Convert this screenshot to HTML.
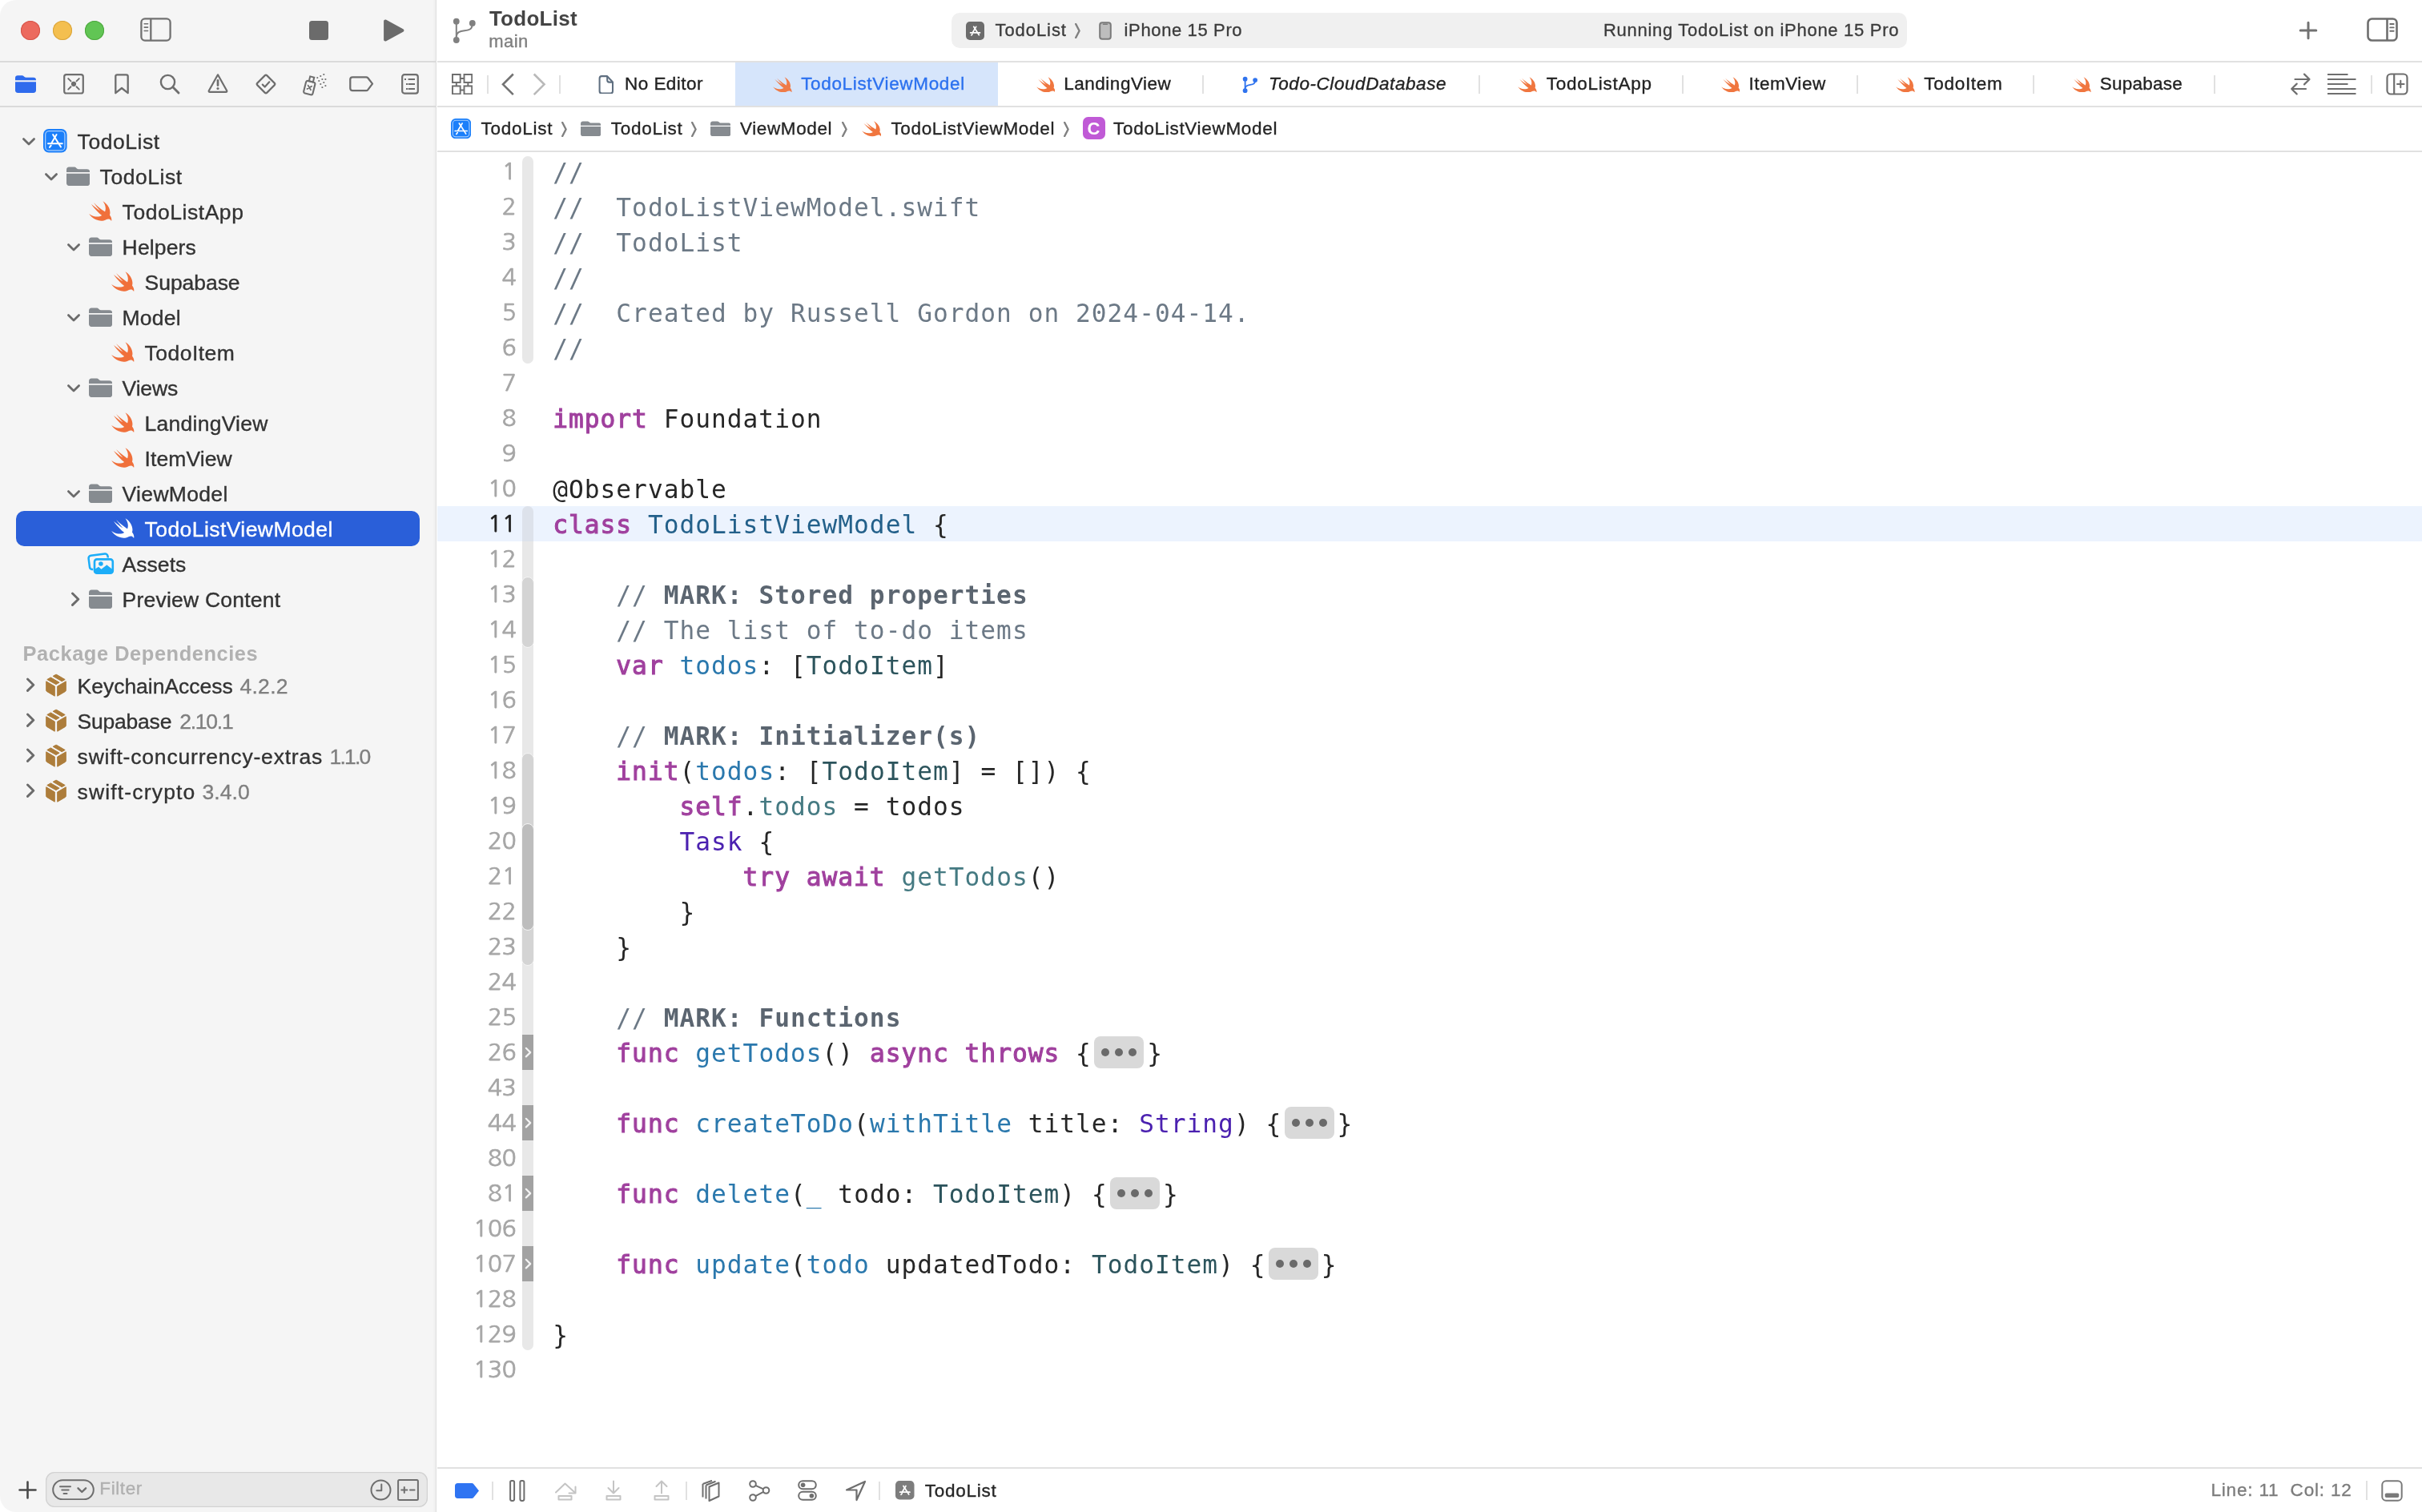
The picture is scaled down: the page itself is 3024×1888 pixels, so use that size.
<!DOCTYPE html>
<html lang="en"><head><meta charset="utf-8"><title>TodoList — TodoListViewModel.swift</title>
<style>
html,body{margin:0;padding:0}
body{width:3024px;height:1888px;overflow:hidden;background:#fff;position:relative;font-family:"Liberation Sans", sans-serif;-webkit-font-smoothing:antialiased}
#sidebar{position:absolute;left:0;top:0;width:544.4px;height:1888px;background:linear-gradient(to right,#f5f5f5 540px,#ededed 544px);border-right:1.6px solid #dedede;border-radius:20px 0 0 20px;box-sizing:content-box}
#win{position:absolute;left:0;top:0;width:3024px;height:1888px;will-change:transform}
.t{position:absolute;white-space:pre;-webkit-text-stroke:0.35px currentColor}
.ln{position:absolute;left:546px;width:98.7px;text-align:right;height:44px;line-height:43px;font-size:29.5px;font-family:"NanumGothic", "Liberation Sans", sans-serif;-webkit-text-stroke:0.75px currentColor}
.cl{position:absolute;left:690.2px;margin:0;height:44px;line-height:46.4px;font-size:31.2px;letter-spacing:1.006px;font-family:"DejaVu Sans Mono", "Liberation Mono", monospace;white-space:pre;color:#262626}
.k{color:#a0409e;-webkit-text-stroke:1.05px #a0409e}
.fold{display:inline-block;vertical-align:top;width:62px;height:40px;margin:2px 4px 0 3.3px;border-radius:8px;background:#d9d9d9;position:relative}
.fold i{position:absolute;top:15px;width:10px;height:10px;border-radius:50%;background:#6a6a6a}
.fold i:nth-child(1){left:9.1px}.fold i:nth-child(2){left:26px}.fold i:nth-child(3){left:43.1px}
</style></head>
<body>
<div id="win">
<div id="sidebar"></div>
<div style="position:absolute;left:0px;top:76px;width:544px;height:2px;background:#dadada"></div>
<div style="position:absolute;left:0px;top:132px;width:544px;height:2px;background:#dadada"></div>
<div style="position:absolute;left:26px;top:26px;width:24px;height:24px;border-radius:50%;background:#ec6a5e;box-shadow:inset 0 0 0 1px #d5554a"></div>
<div style="position:absolute;left:66px;top:26px;width:24px;height:24px;border-radius:50%;background:#f4bf4f;box-shadow:inset 0 0 0 1px #d9a43c"></div>
<div style="position:absolute;left:106px;top:26px;width:24px;height:24px;border-radius:50%;background:#61c554;box-shadow:inset 0 0 0 1px #4ea73f"></div>
<svg style="position:absolute;left:174px;top:21px" width="41" height="32" viewBox="0 0 41 32" ><rect x="2.4" y="2.400" width="36.200" height="27.200" rx="4.600" fill="none" stroke="#717171" stroke-width="2.300"/><path d="M14.300 2.500V29.500" stroke="#717171" stroke-width="2.300"/><path d="M6.200 8.700H10.600M6.200 13.100H10.600M6.200 17.500H10.600" stroke="#717171" stroke-width="1.600" stroke-linecap="round"/></svg>
<div style="position:absolute;left:386px;top:26px;width:24px;height:24px;background:#6b6b6b;border-radius:3.5px"></div>
<svg style="position:absolute;left:477.3px;top:23px" width="29.5" height="30" viewBox="0 0 28 30" preserveAspectRatio="none"><path d="M2 3.4C2 1.7 3.6.9 5 1.7L25 13.2c1.4.8 1.4 2.8 0 3.6L5 28.3c-1.4.8-3-.0-3-1.7Z" fill="#6b6b6b"/></svg>
<svg style="position:absolute;left:19px;top:94px" width="26" height="22.2" viewBox="0 0 27 23" preserveAspectRatio="none"><path d="M0 3.6C0 1.4 1.2.3 3.3.3H8.4c1.2 0 1.900.3 2.700 1l.9.8c.6.5 1.100.7 2 .7H23.600c2.200 0 3.400 1.200 3.400 3.400V6.600H0Z" fill="#2f6bed"/><path d="M0 8.500H27V19.300c0 2.300-1.200 3.500-3.500 3.500H3.500C1.200 22.800 0 21.600 0 19.300Z" fill="#2f6bed"/></svg>
<svg style="position:absolute;left:79px;top:92.2px" width="26" height="25.7" viewBox="0 0 26 25.700" ><rect x="1.200" y="1.200" width="23.600" height="23.300" rx="2.600" fill="none" stroke="#6e6e6e" stroke-width="2.200"/><path d="M6.200 6.100L9.500 9.400M19.800 6.100L16.500 9.400M6.200 19.600L9.500 16.300M19.800 19.600L16.500 16.300" stroke="#6e6e6e" stroke-width="1.900" stroke-linecap="round"/><circle cx="13" cy="12.850" r="3.100" fill="#6e6e6e"/></svg>
<svg style="position:absolute;left:143px;top:92.2px" width="18" height="25.7" viewBox="0 0 18 25.700" ><path d="M1.300 3.300C1.300 2 2 1.300 3.300 1.300H14.700c1.300 0 2 .7 2 2V24.200L9 18L1.300 24.200Z" fill="none" stroke="#6e6e6e" stroke-width="2.300" stroke-linejoin="round"/></svg>
<svg style="position:absolute;left:199px;top:92px" width="27" height="27" viewBox="0 0 27 27" ><circle cx="10.500" cy="10.500" r="8.600" fill="none" stroke="#6e6e6e" stroke-width="2.400"/><path d="M16.800 16.800L24 24" stroke="#6e6e6e" stroke-width="2.900" stroke-linecap="round"/></svg>
<svg style="position:absolute;left:259px;top:91px" width="26" height="26" viewBox="0 0 26 26" ><path d="M13 2.300L24.200 22.200c.4.800-.100 1.600-1 1.600H2.800C1.900 23.800 1.400 23 1.800 22.200Z" fill="none" stroke="#6e6e6e" stroke-width="2.200" stroke-linejoin="round"/><path d="M13 9.300V15.600" stroke="#6e6e6e" stroke-width="2.700" stroke-linecap="round"/><circle cx="13" cy="19.500" r="1.600" fill="#6e6e6e"/></svg>
<svg style="position:absolute;left:318px;top:91px" width="28" height="28" viewBox="0 0 28 28" ><path d="M12.600 3.400c.8-.8 2-.8 2.800 0L24.600 12.600c.8.800.8 2 0 2.800L15.400 24.600c-.8.800-2 .8-2.800 0L3.400 15.400c-.8-.8-.8-2 0-2.800Z" fill="none" stroke="#6e6e6e" stroke-width="2.200" stroke-linejoin="round"/><path d="M9.800 14.600L12.700 17.500L18.300 11.300" fill="none" stroke="#6e6e6e" stroke-width="2.200" stroke-linecap="round" stroke-linejoin="round"/></svg>
<svg style="position:absolute;left:376px;top:90px" width="34" height="30" viewBox="0 0 34 30" ><g transform="translate(1.200 .8) rotate(14 10 18)"><rect x="3.500" y="11" width="11.600" height="16" rx="2.200" fill="none" stroke="#6e6e6e" stroke-width="2.100"/><rect x="6.800" y="5" width="5.200" height="6" fill="none" stroke="#6e6e6e" stroke-width="2"/><path d="M7 16.500L11.600 21.100M11.600 16.500L7 21.100" stroke="#6e6e6e" stroke-width="1.800" stroke-linecap="round"/></g><g fill="#6e6e6e"><rect x="19.400" y="6.200" width="1.800" height="1.800"/><rect x="23.400" y="4.100" width="1.800" height="1.800"/><rect x="27.400" y="2.100" width="1.800" height="1.800"/><rect x="21.400" y="10.100" width="1.800" height="1.800"/><rect x="25.500" y="8.100" width="1.800" height="1.800"/><rect x="29.500" y="8.100" width="1.800" height="1.800"/><rect x="23.400" y="14.100" width="1.800" height="1.800"/><rect x="27.400" y="12.100" width="1.800" height="1.800"/><rect x="25.500" y="18.200" width="1.800" height="1.800"/><rect x="29.500" y="16.200" width="1.800" height="1.800"/></g></svg>
<svg style="position:absolute;left:436.4px;top:95.2px" width="30.6" height="19.4" viewBox="0 0 31 20" preserveAspectRatio="none"><path d="M4.200 1.300H21.400c.9 0 1.600.3 2.200 1L29.400 10L23.600 17.700c-.6.7-1.300 1-2.200 1H4.200c-1.800 0-2.900-1.100-2.900-2.900V4.200C1.300 2.400 2.400 1.300 4.200 1.300Z" fill="none" stroke="#6e6e6e" stroke-width="2.300" stroke-linejoin="round"/></svg>
<svg style="position:absolute;left:501px;top:92px" width="22" height="26" viewBox="0 0 22 26" ><rect x="1.200" y="1.200" width="19.600" height="23.400" rx="2.800" fill="none" stroke="#6e6e6e" stroke-width="2.200"/><path d="M8.600 7H17M8.600 13H17M8.600 19H17" stroke="#6e6e6e" stroke-width="2"/><path d="M4 7H6M6 13H8M6 19H8" stroke="#6e6e6e" stroke-width="2"/></svg>
<div style="position:absolute;left:20px;top:638px;width:504px;height:44px;background:#2a5fd9;border-radius:10px"></div>
<svg style="position:absolute;left:27px;top:170.9px" width="18" height="12" viewBox="0 0 18 12" ><path d="M2.4 2.6L9 9L15.6 2.6" fill="none" stroke="#6b6b6b" stroke-width="2.8" stroke-linecap="round" stroke-linejoin="round"/></svg>
<svg style="position:absolute;left:54.3px;top:161.1px" width="29.6" height="29.6" viewBox="0 0 30 30" ><rect x="0" y="0" width="30" height="30" rx="7" fill="#1b7ffa"/><rect x="2.700" y="2.700" width="24.600" height="24.600" rx="4.600" fill="none" stroke="#a9cffd" stroke-width="1.300"/><g fill="none" stroke="#fff" stroke-width="2" stroke-linecap="round"><path d="M16.80 7.20L10.70 17.60"/><path d="M9.80 20.90L8.10 23.20"/><path d="M12.30 7.20L22.30 22.80"/><path d="M6.10 18.50H24.10"/></g></svg>
<div class="t " style="left:96.6px;top:160.72px;font-size:26.5px;line-height:33px;color:#333333;font-weight:400;letter-spacing:0.542px;">TodoList</div>
<svg style="position:absolute;left:55px;top:214.9px" width="18" height="12" viewBox="0 0 18 12" ><path d="M2.4 2.6L9 9L15.6 2.6" fill="none" stroke="#6b6b6b" stroke-width="2.8" stroke-linecap="round" stroke-linejoin="round"/></svg>
<svg style="position:absolute;left:82.7px;top:208.0px" width="29.2" height="24.4" viewBox="0 0 30 24" preserveAspectRatio="none"><path d="M0 4.2C0 1.9 1.2 0.6 3.4 0.6H9.6c1.3 0 2 .3 2.9 1.1l.9.8c.6.5 1.1.7 2 .7H26.4c2.3 0 3.6 1.3 3.6 3.6V7H0Z" fill="#868b90"/><path d="M0 8.6H30V20c0 2.4-1.3 3.7-3.7 3.7H3.7C1.3 23.7 0 22.4 0 20Z" fill="#868b90"/></svg>
<div class="t " style="left:124.6px;top:204.72px;font-size:26.5px;line-height:33px;color:#333333;font-weight:400;letter-spacing:0.542px;">TodoList</div>
<svg style="position:absolute;left:111.3px;top:250.89999999999998px" width="28.6" height="25.4" viewBox="2.3 3.3 18.4 16.7" preserveAspectRatio="none"><path d="M13.543 3.41c4.114 2.47 6.545 7.162 5.549 11.131-.024.093-.05.181-.076.272l.002.001c2.062 2.538 1.5 5.258 1.236 4.745-1.072-2.086-3.066-1.568-4.088-1.043a6.803 6.803 0 0 1-.281.158l-.02.012-.002.002c-2.115 1.123-4.957 1.205-7.812-.022a12.568 12.568 0 0 1-5.64-4.838c.649.48 1.35.902 2.097 1.252 3.019 1.414 6.051 1.311 8.197-.002C9.651 12.73 7.101 9.67 5.146 7.191a10.628 10.628 0 0 1-1.005-1.384c2.34 2.142 6.038 4.83 7.365 5.576C8.69 8.408 6.208 4.743 6.324 4.86c4.436 4.47 8.528 6.996 8.528 6.996.154.085.27.154.36.213.085-.215.16-.437.224-.668.708-2.588-.09-5.548-1.893-7.992z" fill="#f0703b"/></svg>
<div class="t " style="left:152.6px;top:248.72px;font-size:26.5px;line-height:33px;color:#333333;font-weight:400;letter-spacing:0.544px;">TodoListApp</div>
<svg style="position:absolute;left:83px;top:302.9px" width="18" height="12" viewBox="0 0 18 12" ><path d="M2.4 2.6L9 9L15.6 2.6" fill="none" stroke="#6b6b6b" stroke-width="2.8" stroke-linecap="round" stroke-linejoin="round"/></svg>
<svg style="position:absolute;left:110.7px;top:296.0px" width="29.2" height="24.4" viewBox="0 0 30 24" preserveAspectRatio="none"><path d="M0 4.2C0 1.9 1.2 0.6 3.4 0.6H9.6c1.3 0 2 .3 2.9 1.1l.9.8c.6.5 1.1.7 2 .7H26.4c2.3 0 3.6 1.3 3.6 3.6V7H0Z" fill="#868b90"/><path d="M0 8.6H30V20c0 2.4-1.3 3.7-3.7 3.7H3.7C1.3 23.7 0 22.4 0 20Z" fill="#868b90"/></svg>
<div class="t " style="left:152.6px;top:292.72px;font-size:26.5px;line-height:33px;color:#333333;font-weight:400;letter-spacing:0.145px;">Helpers</div>
<svg style="position:absolute;left:139.3px;top:338.9px" width="28.6" height="25.4" viewBox="2.3 3.3 18.4 16.7" preserveAspectRatio="none"><path d="M13.543 3.41c4.114 2.47 6.545 7.162 5.549 11.131-.024.093-.05.181-.076.272l.002.001c2.062 2.538 1.5 5.258 1.236 4.745-1.072-2.086-3.066-1.568-4.088-1.043a6.803 6.803 0 0 1-.281.158l-.02.012-.002.002c-2.115 1.123-4.957 1.205-7.812-.022a12.568 12.568 0 0 1-5.64-4.838c.649.48 1.35.902 2.097 1.252 3.019 1.414 6.051 1.311 8.197-.002C9.651 12.73 7.101 9.67 5.146 7.191a10.628 10.628 0 0 1-1.005-1.384c2.34 2.142 6.038 4.83 7.365 5.576C8.69 8.408 6.208 4.743 6.324 4.86c4.436 4.47 8.528 6.996 8.528 6.996.154.085.27.154.36.213.085-.215.16-.437.224-.668.708-2.588-.09-5.548-1.893-7.992z" fill="#f0703b"/></svg>
<div class="t " style="left:180.6px;top:336.72px;font-size:26.5px;line-height:33px;color:#333333;font-weight:400;letter-spacing:-0.051px;">Supabase</div>
<svg style="position:absolute;left:83px;top:390.9px" width="18" height="12" viewBox="0 0 18 12" ><path d="M2.4 2.6L9 9L15.6 2.6" fill="none" stroke="#6b6b6b" stroke-width="2.8" stroke-linecap="round" stroke-linejoin="round"/></svg>
<svg style="position:absolute;left:110.7px;top:384.0px" width="29.2" height="24.4" viewBox="0 0 30 24" preserveAspectRatio="none"><path d="M0 4.2C0 1.9 1.2 0.6 3.4 0.6H9.6c1.3 0 2 .3 2.9 1.1l.9.8c.6.5 1.1.7 2 .7H26.4c2.3 0 3.6 1.3 3.6 3.6V7H0Z" fill="#868b90"/><path d="M0 8.6H30V20c0 2.4-1.3 3.7-3.7 3.7H3.7C1.3 23.7 0 22.4 0 20Z" fill="#868b90"/></svg>
<div class="t " style="left:152.6px;top:380.72px;font-size:26.5px;line-height:33px;color:#333333;font-weight:400;letter-spacing:0.203px;">Model</div>
<svg style="position:absolute;left:139.3px;top:426.9px" width="28.6" height="25.4" viewBox="2.3 3.3 18.4 16.7" preserveAspectRatio="none"><path d="M13.543 3.41c4.114 2.47 6.545 7.162 5.549 11.131-.024.093-.05.181-.076.272l.002.001c2.062 2.538 1.5 5.258 1.236 4.745-1.072-2.086-3.066-1.568-4.088-1.043a6.803 6.803 0 0 1-.281.158l-.02.012-.002.002c-2.115 1.123-4.957 1.205-7.812-.022a12.568 12.568 0 0 1-5.64-4.838c.649.48 1.35.902 2.097 1.252 3.019 1.414 6.051 1.311 8.197-.002C9.651 12.73 7.101 9.67 5.146 7.191a10.628 10.628 0 0 1-1.005-1.384c2.34 2.142 6.038 4.83 7.365 5.576C8.69 8.408 6.208 4.743 6.324 4.86c4.436 4.47 8.528 6.996 8.528 6.996.154.085.27.154.36.213.085-.215.16-.437.224-.668.708-2.588-.09-5.548-1.893-7.992z" fill="#f0703b"/></svg>
<div class="t " style="left:180.6px;top:424.72px;font-size:26.5px;line-height:33px;color:#333333;font-weight:400;letter-spacing:0.469px;">TodoItem</div>
<svg style="position:absolute;left:83px;top:478.9px" width="18" height="12" viewBox="0 0 18 12" ><path d="M2.4 2.6L9 9L15.6 2.6" fill="none" stroke="#6b6b6b" stroke-width="2.8" stroke-linecap="round" stroke-linejoin="round"/></svg>
<svg style="position:absolute;left:110.7px;top:472.0px" width="29.2" height="24.4" viewBox="0 0 30 24" preserveAspectRatio="none"><path d="M0 4.2C0 1.9 1.2 0.6 3.4 0.6H9.6c1.3 0 2 .3 2.9 1.1l.9.8c.6.5 1.1.7 2 .7H26.4c2.3 0 3.6 1.3 3.6 3.6V7H0Z" fill="#868b90"/><path d="M0 8.6H30V20c0 2.4-1.3 3.7-3.7 3.7H3.7C1.3 23.7 0 22.4 0 20Z" fill="#868b90"/></svg>
<div class="t " style="left:152.6px;top:468.72px;font-size:26.5px;line-height:33px;color:#333333;font-weight:400;letter-spacing:-0.155px;">Views</div>
<svg style="position:absolute;left:139.3px;top:514.9px" width="28.6" height="25.4" viewBox="2.3 3.3 18.4 16.7" preserveAspectRatio="none"><path d="M13.543 3.41c4.114 2.47 6.545 7.162 5.549 11.131-.024.093-.05.181-.076.272l.002.001c2.062 2.538 1.5 5.258 1.236 4.745-1.072-2.086-3.066-1.568-4.088-1.043a6.803 6.803 0 0 1-.281.158l-.02.012-.002.002c-2.115 1.123-4.957 1.205-7.812-.022a12.568 12.568 0 0 1-5.64-4.838c.649.48 1.35.902 2.097 1.252 3.019 1.414 6.051 1.311 8.197-.002C9.651 12.73 7.101 9.67 5.146 7.191a10.628 10.628 0 0 1-1.005-1.384c2.34 2.142 6.038 4.83 7.365 5.576C8.69 8.408 6.208 4.743 6.324 4.86c4.436 4.47 8.528 6.996 8.528 6.996.154.085.27.154.36.213.085-.215.16-.437.224-.668.708-2.588-.09-5.548-1.893-7.992z" fill="#f0703b"/></svg>
<div class="t " style="left:180.6px;top:512.72px;font-size:26.5px;line-height:33px;color:#333333;font-weight:400;letter-spacing:0.252px;">LandingView</div>
<svg style="position:absolute;left:139.3px;top:558.9px" width="28.6" height="25.4" viewBox="2.3 3.3 18.4 16.7" preserveAspectRatio="none"><path d="M13.543 3.41c4.114 2.47 6.545 7.162 5.549 11.131-.024.093-.05.181-.076.272l.002.001c2.062 2.538 1.5 5.258 1.236 4.745-1.072-2.086-3.066-1.568-4.088-1.043a6.803 6.803 0 0 1-.281.158l-.02.012-.002.002c-2.115 1.123-4.957 1.205-7.812-.022a12.568 12.568 0 0 1-5.64-4.838c.649.48 1.35.902 2.097 1.252 3.019 1.414 6.051 1.311 8.197-.002C9.651 12.73 7.101 9.67 5.146 7.191a10.628 10.628 0 0 1-1.005-1.384c2.34 2.142 6.038 4.83 7.365 5.576C8.69 8.408 6.208 4.743 6.324 4.86c4.436 4.47 8.528 6.996 8.528 6.996.154.085.27.154.36.213.085-.215.16-.437.224-.668.708-2.588-.09-5.548-1.893-7.992z" fill="#f0703b"/></svg>
<div class="t " style="left:180.6px;top:556.72px;font-size:26.5px;line-height:33px;color:#333333;font-weight:400;letter-spacing:0.071px;">ItemView</div>
<svg style="position:absolute;left:83px;top:610.9px" width="18" height="12" viewBox="0 0 18 12" ><path d="M2.4 2.6L9 9L15.6 2.6" fill="none" stroke="#6b6b6b" stroke-width="2.8" stroke-linecap="round" stroke-linejoin="round"/></svg>
<svg style="position:absolute;left:110.7px;top:604.0px" width="29.2" height="24.4" viewBox="0 0 30 24" preserveAspectRatio="none"><path d="M0 4.2C0 1.9 1.2 0.6 3.4 0.6H9.6c1.3 0 2 .3 2.9 1.1l.9.8c.6.5 1.1.7 2 .7H26.4c2.3 0 3.6 1.3 3.6 3.6V7H0Z" fill="#868b90"/><path d="M0 8.6H30V20c0 2.4-1.3 3.7-3.7 3.7H3.7C1.3 23.7 0 22.4 0 20Z" fill="#868b90"/></svg>
<div class="t " style="left:152.6px;top:600.72px;font-size:26.5px;line-height:33px;color:#333333;font-weight:400;letter-spacing:0.320px;">ViewModel</div>
<svg style="position:absolute;left:139.3px;top:646.9px" width="28.6" height="25.4" viewBox="2.3 3.3 18.4 16.7" preserveAspectRatio="none"><path d="M13.543 3.41c4.114 2.47 6.545 7.162 5.549 11.131-.024.093-.05.181-.076.272l.002.001c2.062 2.538 1.5 5.258 1.236 4.745-1.072-2.086-3.066-1.568-4.088-1.043a6.803 6.803 0 0 1-.281.158l-.02.012-.002.002c-2.115 1.123-4.957 1.205-7.812-.022a12.568 12.568 0 0 1-5.64-4.838c.649.48 1.35.902 2.097 1.252 3.019 1.414 6.051 1.311 8.197-.002C9.651 12.73 7.101 9.67 5.146 7.191a10.628 10.628 0 0 1-1.005-1.384c2.34 2.142 6.038 4.83 7.365 5.576C8.69 8.408 6.208 4.743 6.324 4.86c4.436 4.47 8.528 6.996 8.528 6.996.154.085.27.154.36.213.085-.215.16-.437.224-.668.708-2.588-.09-5.548-1.893-7.992z" fill="#fff"/></svg>
<div class="t " style="left:180.6px;top:644.72px;font-size:26.5px;line-height:33px;color:#fff;font-weight:400;letter-spacing:0.429px;">TodoListViewModel</div>
<svg style="position:absolute;left:108px;top:688.0px" width="36" height="31" viewBox="0 0 36 31" ><rect x="3.200" y="4.550" width="24.100" height="17.400" rx="3.200" fill="none" stroke="#1cadf8" stroke-width="2.500" transform="rotate(-7.300 15.250 13.250)"/><rect x="8.200" y="8.600" width="26.400" height="20.900" rx="4.600" fill="#f5f5f5"/><path d="M10 23L15.100 19.800L18.500 22.800L24.600 17.900c.5-.4 1-.4 1.500 0L32.800 23.300V27.700H10Z" fill="#1cadf8"/><circle cx="17.900" cy="16" r="2.800" fill="#1cadf8"/><rect x="10" y="10.400" width="22.800" height="17.300" rx="3" fill="none" stroke="#1cadf8" stroke-width="2.600"/></svg>
<div class="t " style="left:152.6px;top:688.72px;font-size:26.5px;line-height:33px;color:#333333;font-weight:400;letter-spacing:0.034px;">Assets</div>
<svg style="position:absolute;left:87.85px;top:739.1999999999999px" width="12.3" height="18.4" viewBox="0 0 12.300 18.400" ><path d="M2.500 2L9.800 9.200L2.500 16.400" fill="none" stroke="#6b6b6b" stroke-width="2.900" stroke-linecap="round" stroke-linejoin="round"/></svg>
<svg style="position:absolute;left:110.7px;top:736.0px" width="29.2" height="24.4" viewBox="0 0 30 24" preserveAspectRatio="none"><path d="M0 4.2C0 1.9 1.2 0.6 3.4 0.6H9.6c1.3 0 2 .3 2.9 1.1l.9.8c.6.5 1.1.7 2 .7H26.4c2.3 0 3.6 1.3 3.6 3.6V7H0Z" fill="#868b90"/><path d="M0 8.6H30V20c0 2.4-1.3 3.7-3.7 3.7H3.7C1.3 23.7 0 22.4 0 20Z" fill="#868b90"/></svg>
<div class="t " style="left:152.6px;top:732.72px;font-size:26.5px;line-height:33px;color:#333333;font-weight:400;letter-spacing:0.219px;">Preview Content</div>
<div class="t " style="left:28.6px;top:799.90px;font-size:25.4px;line-height:32px;color:#b1b1b1;font-weight:700;letter-spacing:0.565px;-webkit-text-stroke:0;">Package Dependencies</div>
<svg style="position:absolute;left:31.9px;top:846.15px" width="12.3" height="18.4" viewBox="0 0 12.300 18.400" ><path d="M2.500 2L9.800 9.200L2.500 16.400" fill="none" stroke="#6b6b6b" stroke-width="2.900" stroke-linecap="round" stroke-linejoin="round"/></svg>
<svg style="position:absolute;left:56px;top:841px" width="28" height="30" viewBox="0 0 28 30" ><g fill="#ad7d3b" stroke="#ad7d3b" stroke-width="1" stroke-linejoin="round"><path d="M1.700 9.800L12.300 16V28.200L2.600 22.500c-.6-.4-.9-.9-.9-1.600Z"/><path d="M26.300 9.800L15.700 16V28.200L25.400 22.500c.6-.4.9-.9.9-1.600Z"/><path d="M2.800 7.500L7.300 4.900L18.100 11.200L13.900 13.600Z"/><path d="M10.200 3.300L13.300 1.500c.5-.3 1.100-.3 1.600 0L25.200 7.500L21.200 9.700Z"/></g></svg>
<div class="t " style="left:96.6px;top:840.72px;font-size:26.5px;line-height:33px;color:#333333;font-weight:400;letter-spacing:-0.026px;">KeychainAccess</div>
<div class="t " style="left:299.40000000000003px;top:840.72px;font-size:26.5px;line-height:33px;color:#7f7f7f;font-weight:400;letter-spacing:0.312px;">4.2.2</div>
<svg style="position:absolute;left:31.9px;top:890.15px" width="12.3" height="18.4" viewBox="0 0 12.300 18.400" ><path d="M2.500 2L9.800 9.200L2.500 16.400" fill="none" stroke="#6b6b6b" stroke-width="2.900" stroke-linecap="round" stroke-linejoin="round"/></svg>
<svg style="position:absolute;left:56px;top:885px" width="28" height="30" viewBox="0 0 28 30" ><g fill="#ad7d3b" stroke="#ad7d3b" stroke-width="1" stroke-linejoin="round"><path d="M1.700 9.800L12.300 16V28.200L2.600 22.500c-.6-.4-.9-.9-.9-1.600Z"/><path d="M26.300 9.800L15.700 16V28.200L25.400 22.500c.6-.4.9-.9.9-1.600Z"/><path d="M2.800 7.500L7.300 4.900L18.100 11.200L13.900 13.600Z"/><path d="M10.200 3.300L13.300 1.500c.5-.3 1.100-.3 1.600 0L25.200 7.500L21.200 9.700Z"/></g></svg>
<div class="t " style="left:96.6px;top:884.72px;font-size:26.5px;line-height:33px;color:#333333;font-weight:400;letter-spacing:-0.223px;">Supabase</div>
<div class="t " style="left:224.20000000000002px;top:884.72px;font-size:26.5px;line-height:33px;color:#7f7f7f;font-weight:400;letter-spacing:-1.238px;">2.10.1</div>
<svg style="position:absolute;left:31.9px;top:934.15px" width="12.3" height="18.4" viewBox="0 0 12.300 18.400" ><path d="M2.500 2L9.800 9.200L2.500 16.400" fill="none" stroke="#6b6b6b" stroke-width="2.900" stroke-linecap="round" stroke-linejoin="round"/></svg>
<svg style="position:absolute;left:56px;top:929px" width="28" height="30" viewBox="0 0 28 30" ><g fill="#ad7d3b" stroke="#ad7d3b" stroke-width="1" stroke-linejoin="round"><path d="M1.700 9.800L12.300 16V28.200L2.600 22.500c-.6-.4-.9-.9-.9-1.600Z"/><path d="M26.300 9.800L15.700 16V28.200L25.400 22.500c.6-.4.9-.9.9-1.600Z"/><path d="M2.800 7.500L7.300 4.900L18.100 11.200L13.900 13.600Z"/><path d="M10.200 3.300L13.300 1.500c.5-.3 1.100-.3 1.600 0L25.200 7.500L21.200 9.700Z"/></g></svg>
<div class="t " style="left:96.6px;top:928.72px;font-size:26.5px;line-height:33px;color:#333333;font-weight:400;letter-spacing:0.806px;">swift-concurrency-extras</div>
<div class="t " style="left:411.5px;top:928.72px;font-size:26.5px;line-height:33px;color:#7f7f7f;font-weight:400;letter-spacing:-1.813px;">1.1.0</div>
<svg style="position:absolute;left:31.9px;top:978.15px" width="12.3" height="18.4" viewBox="0 0 12.300 18.400" ><path d="M2.500 2L9.800 9.200L2.500 16.400" fill="none" stroke="#6b6b6b" stroke-width="2.900" stroke-linecap="round" stroke-linejoin="round"/></svg>
<svg style="position:absolute;left:56px;top:973px" width="28" height="30" viewBox="0 0 28 30" ><g fill="#ad7d3b" stroke="#ad7d3b" stroke-width="1" stroke-linejoin="round"><path d="M1.700 9.800L12.300 16V28.200L2.600 22.500c-.6-.4-.9-.9-.9-1.600Z"/><path d="M26.300 9.800L15.700 16V28.200L25.400 22.500c.6-.4.9-.9.9-1.600Z"/><path d="M2.800 7.500L7.300 4.900L18.100 11.200L13.900 13.600Z"/><path d="M10.200 3.300L13.300 1.500c.5-.3 1.100-.3 1.600 0L25.200 7.500L21.200 9.700Z"/></g></svg>
<div class="t " style="left:96.6px;top:972.72px;font-size:26.5px;line-height:33px;color:#333333;font-weight:400;letter-spacing:1.155px;">swift-crypto</div>
<div class="t " style="left:252.4px;top:972.72px;font-size:26.5px;line-height:33px;color:#7f7f7f;font-weight:400;letter-spacing:0.112px;">3.4.0</div>
<svg style="position:absolute;left:23px;top:1849px" width="23" height="23" viewBox="0 0 23 23" ><path d="M11.500 1.500V21.500M1.500 11.500H21.500" stroke="#4a4a4a" stroke-width="2.600" stroke-linecap="round"/></svg>
<div style="position:absolute;left:56.5px;top:1838.2px;width:477px;height:43.4px;background:#e8e8e8;border-radius:11px;box-shadow:inset 0 0 0 1.3px #d2d2d2"></div>
<svg style="position:absolute;left:64.5px;top:1846.5px" width="53" height="26.5" viewBox="0 0 53 26.500" ><rect x="1.200" y="1.200" width="50.600" height="24.100" rx="12.050" fill="none" stroke="#6e6e6e" stroke-width="2"/><path d="M10 9.300H23M12.300 13.600H20.700M14.500 17.900H18.500" stroke="#6e6e6e" stroke-width="2" stroke-linecap="round"/><path d="M32.500 11.300L37.300 16L42.100 11.300" fill="none" stroke="#6e6e6e" stroke-width="2.400" stroke-linecap="round" stroke-linejoin="round"/></svg>
<div class="t " style="left:124.3px;top:1845.00px;font-size:22.5px;line-height:28px;color:#b0b0b0;font-weight:400;letter-spacing:0.600px;">Filter</div>
<svg style="position:absolute;left:461.5px;top:1846.5px" width="27" height="27" viewBox="0 0 27 27" ><circle cx="13.500" cy="13.500" r="12" fill="none" stroke="#6e6e6e" stroke-width="2"/><path d="M14.300 6.500V14.300H8.300" fill="none" stroke="#6e6e6e" stroke-width="2" stroke-linecap="round" stroke-linejoin="round"/></svg>
<svg style="position:absolute;left:495.5px;top:1846.5px" width="27" height="27" viewBox="0 0 27 27" ><rect x="1.100" y="1.100" width="24.800" height="24.800" rx="1.500" fill="none" stroke="#6e6e6e" stroke-width="2"/><path d="M5.200 13.500H12.400M8.800 9.900V17.100M16 13.500H21.600" stroke="#6e6e6e" stroke-width="2" stroke-linecap="round"/></svg>
<div style="position:absolute;left:546px;top:76px;width:2478px;height:2px;background:#e1e1e1"></div>
<div style="position:absolute;left:546px;top:132px;width:2478px;height:2px;background:#e1e1e1"></div>
<div style="position:absolute;left:546px;top:188px;width:2478px;height:2px;background:#e1e1e1"></div>
<div style="position:absolute;left:546px;top:1832px;width:2478px;height:2px;background:#e1e1e1"></div>
<svg style="position:absolute;left:564px;top:21px" width="32" height="35" viewBox="4 1 32 35" ><g fill="none" stroke="#808080" stroke-width="2" stroke-linecap="round"><path d="M9.800 6.700V30"/><path d="M29.800 8.900C29.800 16 27 17.400 20 18.200C14 18.900 10.300 20 9.800 25.500"/></g><circle cx="9.800" cy="6.700" r="3.9" fill="#808080"/><circle cx="29.800" cy="8.900" r="3.9" fill="#808080"/><circle cx="9.800" cy="30" r="3.9" fill="#808080"/></svg>
<div class="t " style="left:610.9px;top:6.89px;font-size:26px;line-height:32px;color:#444444;font-weight:700;letter-spacing:0.267px;-webkit-text-stroke:0;">TodoList</div>
<div class="t " style="left:610.2px;top:38.08px;font-size:22px;line-height:28px;color:#7f7f7f;font-weight:400;letter-spacing:0.438px;">main</div>
<div style="position:absolute;left:1188px;top:15.7px;width:1193px;height:44.3px;background:#f0f0f0;border-radius:10.500px"></div>
<svg style="position:absolute;left:1206px;top:27px" width="23" height="23" viewBox="0 0 30 30" ><rect x="0" y="0" width="30" height="30" rx="6.5" fill="#6c6c6c"/><g fill="none" stroke="#fff" stroke-width="2.2" stroke-linecap="round"><path d="M16.56 8.23L11.27 17.26"/><path d="M10.48 20.12L9.01 22.12"/><path d="M12.66 8.23L21.34 21.77"/><path d="M7.27 18.04H22.90"/></g></svg>
<div class="t " style="left:1242.5px;top:24.18px;font-size:22px;line-height:28px;color:#3c3c3c;font-weight:400;letter-spacing:0.935px;">TodoList</div>
<svg style="position:absolute;left:1342.2px;top:29.200000000000003px" width="7" height="19" viewBox="0 0 7 19" ><path d="M1.200 1L5.600 9.500L1.200 18" fill="none" stroke="#808080" stroke-width="2.400" stroke-linecap="round" stroke-linejoin="round"/></svg>
<svg style="position:absolute;left:1372px;top:26.5px" width="16" height="23" viewBox="0 0 16 23" ><rect x="1.200" y="1.200" width="13.600" height="20.600" rx="3" fill="#bdbdbd" stroke="#7a7a7a" stroke-width="2"/><path d="M5.500 3.300H10.500" stroke="#7a7a7a" stroke-width="1.600" stroke-linecap="round"/></svg>
<div class="t " style="left:1403.6px;top:24.18px;font-size:22px;line-height:28px;color:#3c3c3c;font-weight:400;letter-spacing:0.630px;">iPhone 15 Pro</div>
<div class="t " style="left:2002px;top:24.18px;font-size:22px;line-height:28px;color:#3c3c3c;font-weight:400;letter-spacing:0.711px;">Running TodoList on iPhone 15 Pro</div>
<svg style="position:absolute;left:2869px;top:25px" width="26" height="26" viewBox="0 0 26 26" ><path d="M13 3.200V22.800M3.200 13H22.800" stroke="#727272" stroke-width="3" stroke-linecap="round"/></svg>
<svg style="position:absolute;left:2954px;top:21px" width="41" height="32" viewBox="0 0 41 32" ><rect x="2.500" y="2.500" width="36" height="27" rx="5" fill="none" stroke="#6e6e6e" stroke-width="2.600"/><path d="M26.500 2.500V29.500" stroke="#6e6e6e" stroke-width="2.600"/><path d="M30.200 9H34.700M30.200 13.400H34.700M30.200 17.800H34.700" stroke="#6e6e6e" stroke-width="1.900" stroke-linecap="round"/></svg>
<svg style="position:absolute;left:563.9px;top:91.7px" width="26.2" height="26.4" viewBox="0 0 27 26.500" preserveAspectRatio="none"><g fill="none" stroke="#6e6e6e" stroke-width="2"><rect x="1" y="1" width="10" height="10"/><rect x="16" y="1" width="10" height="10"/><rect x="1" y="15.500" width="10" height="10"/><rect x="16" y="15.500" width="10" height="10"/><path d="M11 6H16M6 11V15.500M11 20.500H16M21 11V15.500" /></g></svg>
<div style="position:absolute;left:607.8px;top:93.5px;width:2px;height:23px;background:#e1e1e1"></div>
<svg style="position:absolute;left:624px;top:91px" width="19" height="29" viewBox="0 0 19 29" ><path d="M16.800 1.500L4 14.300L16.800 27.100" fill="none" stroke="#737373" stroke-width="2.600" stroke-linejoin="miter"/></svg>
<svg style="position:absolute;left:664.4px;top:91px" width="19" height="29" viewBox="0 0 19 29" ><path d="M2.700 1.500L15.500 14.300L2.700 27.100" fill="none" stroke="#b9b9b9" stroke-width="2.600" stroke-linejoin="miter"/></svg>
<div style="position:absolute;left:697.6px;top:93.5px;width:2px;height:23px;background:#e1e1e1"></div>
<svg style="position:absolute;left:747.1px;top:93.5px" width="19.6" height="23.8" viewBox="0 0 21 23.500" preserveAspectRatio="none"><path d="M4.500 1.200H12L19.300 8.500V19.500c0 1.800-1 2.800-2.800 2.800H4.500c-1.800 0-2.800-1-2.800-2.800V4c0-1.800 1-2.800 2.800-2.800Z" fill="none" stroke="#5f6f80" stroke-width="2.200" stroke-linejoin="round"/><path d="M12 1.200V6c0 1.600.9 2.500 2.500 2.500H19.300" fill="none" stroke="#5f6f80" stroke-width="2.200" stroke-linejoin="round"/></svg>
<div class="t " style="left:780px;top:91.00px;font-size:22.5px;line-height:28px;color:#222222;font-weight:400;letter-spacing:0.463px;">No Editor</div>
<div style="position:absolute;left:918.2px;top:77.6px;width:327.5px;height:54.4px;background:#d6e5fb"></div>
<svg style="position:absolute;left:965.4px;top:95.5px" width="23.8" height="19.8" viewBox="2.3 3.3 18.4 16.7" preserveAspectRatio="none"><path d="M13.543 3.41c4.114 2.47 6.545 7.162 5.549 11.131-.024.093-.05.181-.076.272l.002.001c2.062 2.538 1.5 5.258 1.236 4.745-1.072-2.086-3.066-1.568-4.088-1.043a6.803 6.803 0 0 1-.281.158l-.02.012-.002.002c-2.115 1.123-4.957 1.205-7.812-.022a12.568 12.568 0 0 1-5.64-4.838c.649.48 1.35.902 2.097 1.252 3.019 1.414 6.051 1.311 8.197-.002C9.651 12.73 7.101 9.67 5.146 7.191a10.628 10.628 0 0 1-1.005-1.384c2.34 2.142 6.038 4.83 7.365 5.576C8.69 8.408 6.208 4.743 6.324 4.86c4.436 4.47 8.528 6.996 8.528 6.996.154.085.27.154.36.213.085-.215.16-.437.224-.668.708-2.588-.09-5.548-1.893-7.992z" fill="#ef7b48"/></svg>
<div class="t " style="left:1000.2px;top:91.00px;font-size:22.5px;line-height:28px;color:#2c71ef;font-weight:400;letter-spacing:0.659px;">TodoListViewModel</div>
<svg style="position:absolute;left:1293.5px;top:95.5px" width="23.8" height="19.8" viewBox="2.3 3.3 18.4 16.7" preserveAspectRatio="none"><path d="M13.543 3.41c4.114 2.47 6.545 7.162 5.549 11.131-.024.093-.05.181-.076.272l.002.001c2.062 2.538 1.5 5.258 1.236 4.745-1.072-2.086-3.066-1.568-4.088-1.043a6.803 6.803 0 0 1-.281.158l-.02.012-.002.002c-2.115 1.123-4.957 1.205-7.812-.022a12.568 12.568 0 0 1-5.64-4.838c.649.48 1.35.902 2.097 1.252 3.019 1.414 6.051 1.311 8.197-.002C9.651 12.73 7.101 9.67 5.146 7.191a10.628 10.628 0 0 1-1.005-1.384c2.34 2.142 6.038 4.83 7.365 5.576C8.69 8.408 6.208 4.743 6.324 4.86c4.436 4.47 8.528 6.996 8.528 6.996.154.085.27.154.36.213.085-.215.16-.437.224-.668.708-2.588-.09-5.548-1.893-7.992z" fill="#f0763f"/></svg>
<div class="t " style="left:1328.3000000000002px;top:91.00px;font-size:22.5px;line-height:28px;color:#222222;font-weight:400;letter-spacing:0.505px;">LandingView</div>
<div style="position:absolute;left:1500.5px;top:93.5px;width:2px;height:23px;background:#e1e1e1"></div>
<svg style="position:absolute;left:1550.5px;top:94px" width="20" height="24" viewBox="4 1 32 35" ><g fill="none" stroke="#2f73ee" stroke-width="3" stroke-linecap="round"><path d="M9.800 6.700V30"/><path d="M29.800 8.900C29.800 16 27 17.400 20 18.200C14 18.900 10.300 20 9.800 25.500"/></g><circle cx="9.800" cy="6.700" r="4.6" fill="#2f73ee"/><circle cx="29.800" cy="8.900" r="4.6" fill="#2f73ee"/><circle cx="9.800" cy="30" r="4.6" fill="#2f73ee"/></svg>
<div class="t " style="left:1584.0px;top:91.00px;font-size:22.5px;line-height:28px;color:#222222;font-weight:400;letter-spacing:0.569px;font-style:italic;">Todo-CloudDatabase</div>
<div style="position:absolute;left:1846px;top:93.5px;width:2px;height:23px;background:#e1e1e1"></div>
<svg style="position:absolute;left:1895.4px;top:95.5px" width="23.8" height="19.8" viewBox="2.3 3.3 18.4 16.7" preserveAspectRatio="none"><path d="M13.543 3.41c4.114 2.47 6.545 7.162 5.549 11.131-.024.093-.05.181-.076.272l.002.001c2.062 2.538 1.5 5.258 1.236 4.745-1.072-2.086-3.066-1.568-4.088-1.043a6.803 6.803 0 0 1-.281.158l-.02.012-.002.002c-2.115 1.123-4.957 1.205-7.812-.022a12.568 12.568 0 0 1-5.64-4.838c.649.48 1.35.902 2.097 1.252 3.019 1.414 6.051 1.311 8.197-.002C9.651 12.73 7.101 9.67 5.146 7.191a10.628 10.628 0 0 1-1.005-1.384c2.34 2.142 6.038 4.83 7.365 5.576C8.69 8.408 6.208 4.743 6.324 4.86c4.436 4.47 8.528 6.996 8.528 6.996.154.085.27.154.36.213.085-.215.16-.437.224-.668.708-2.588-.09-5.548-1.893-7.992z" fill="#f0763f"/></svg>
<div class="t " style="left:1930.8000000000002px;top:91.00px;font-size:22.5px;line-height:28px;color:#222222;font-weight:400;letter-spacing:0.726px;">TodoListApp</div>
<div style="position:absolute;left:2099.6px;top:93.5px;width:2px;height:23px;background:#e1e1e1"></div>
<svg style="position:absolute;left:2148.6px;top:95.5px" width="23.8" height="19.8" viewBox="2.3 3.3 18.4 16.7" preserveAspectRatio="none"><path d="M13.543 3.41c4.114 2.47 6.545 7.162 5.549 11.131-.024.093-.05.181-.076.272l.002.001c2.062 2.538 1.5 5.258 1.236 4.745-1.072-2.086-3.066-1.568-4.088-1.043a6.803 6.803 0 0 1-.281.158l-.02.012-.002.002c-2.115 1.123-4.957 1.205-7.812-.022a12.568 12.568 0 0 1-5.64-4.838c.649.48 1.35.902 2.097 1.252 3.019 1.414 6.051 1.311 8.197-.002C9.651 12.73 7.101 9.67 5.146 7.191a10.628 10.628 0 0 1-1.005-1.384c2.34 2.142 6.038 4.83 7.365 5.576C8.69 8.408 6.208 4.743 6.324 4.86c4.436 4.47 8.528 6.996 8.528 6.996.154.085.27.154.36.213.085-.215.16-.437.224-.668.708-2.588-.09-5.548-1.893-7.992z" fill="#f0763f"/></svg>
<div class="t " style="left:2183.4px;top:91.00px;font-size:22.5px;line-height:28px;color:#222222;font-weight:400;letter-spacing:0.525px;">ItemView</div>
<div style="position:absolute;left:2318px;top:93.5px;width:2px;height:23px;background:#e1e1e1"></div>
<svg style="position:absolute;left:2367px;top:95.5px" width="23.8" height="19.8" viewBox="2.3 3.3 18.4 16.7" preserveAspectRatio="none"><path d="M13.543 3.41c4.114 2.47 6.545 7.162 5.549 11.131-.024.093-.05.181-.076.272l.002.001c2.062 2.538 1.5 5.258 1.236 4.745-1.072-2.086-3.066-1.568-4.088-1.043a6.803 6.803 0 0 1-.281.158l-.02.012-.002.002c-2.115 1.123-4.957 1.205-7.812-.022a12.568 12.568 0 0 1-5.64-4.838c.649.48 1.35.902 2.097 1.252 3.019 1.414 6.051 1.311 8.197-.002C9.651 12.73 7.101 9.67 5.146 7.191a10.628 10.628 0 0 1-1.005-1.384c2.34 2.142 6.038 4.83 7.365 5.576C8.69 8.408 6.208 4.743 6.324 4.86c4.436 4.47 8.528 6.996 8.528 6.996.154.085.27.154.36.213.085-.215.16-.437.224-.668.708-2.588-.09-5.548-1.893-7.992z" fill="#f0763f"/></svg>
<div class="t " style="left:2402.3px;top:91.00px;font-size:22.5px;line-height:28px;color:#222222;font-weight:400;letter-spacing:0.705px;">TodoItem</div>
<div style="position:absolute;left:2538px;top:93.5px;width:2px;height:23px;background:#e1e1e1"></div>
<svg style="position:absolute;left:2587px;top:95.5px" width="23.8" height="19.8" viewBox="2.3 3.3 18.4 16.7" preserveAspectRatio="none"><path d="M13.543 3.41c4.114 2.47 6.545 7.162 5.549 11.131-.024.093-.05.181-.076.272l.002.001c2.062 2.538 1.5 5.258 1.236 4.745-1.072-2.086-3.066-1.568-4.088-1.043a6.803 6.803 0 0 1-.281.158l-.02.012-.002.002c-2.115 1.123-4.957 1.205-7.812-.022a12.568 12.568 0 0 1-5.64-4.838c.649.48 1.35.902 2.097 1.252 3.019 1.414 6.051 1.311 8.197-.002C9.651 12.73 7.101 9.67 5.146 7.191a10.628 10.628 0 0 1-1.005-1.384c2.34 2.142 6.038 4.83 7.365 5.576C8.69 8.408 6.208 4.743 6.324 4.86c4.436 4.47 8.528 6.996 8.528 6.996.154.085.27.154.36.213.085-.215.16-.437.224-.668.708-2.588-.09-5.548-1.893-7.992z" fill="#f0763f"/></svg>
<div class="t " style="left:2621.7000000000003px;top:91.00px;font-size:22.5px;line-height:28px;color:#222222;font-weight:400;letter-spacing:0.265px;">Supabase</div>
<div style="position:absolute;left:2763.6px;top:93.5px;width:2px;height:23px;background:#e1e1e1"></div>
<svg style="position:absolute;left:2859px;top:91px" width="27" height="28" viewBox="0 0 27 28" ><g fill="none" stroke="#6e6e6e" stroke-width="2.200" stroke-linecap="round" stroke-linejoin="round"><path d="M6.500 8H24.500M18 1.600L24.500 8L18 14.400"/><path d="M20 20H2.200M8.700 13.600L2.200 20L8.700 26.400"/></g></svg>
<svg style="position:absolute;left:2905px;top:91px" width="38" height="28" viewBox="0 0 38 28" ><path d="M1 2H26.500M1 8H36.500M1 14H26.500M1 20H36.500M1 26H36.500" stroke="#6e6e6e" stroke-width="2"/></svg>
<div style="position:absolute;left:2960px;top:93.5px;width:2px;height:23px;background:#e1e1e1"></div>
<svg style="position:absolute;left:2979px;top:91px" width="28" height="28" viewBox="0 0 28 28" ><rect x="1.500" y="1.500" width="25" height="25" rx="4.500" fill="none" stroke="#6e6e6e" stroke-width="2.200"/><path d="M10.200 1.500V26.500" stroke="#6e6e6e" stroke-width="2.200"/><path d="M14 14H22.600M18.300 9.700V18.300" stroke="#6e6e6e" stroke-width="2" stroke-linecap="round"/></svg>
<svg style="position:absolute;left:563.3px;top:147.5px" width="25.2" height="25.2" viewBox="0 0 30 30" ><rect x="0" y="0" width="30" height="30" rx="7" fill="#1b7ffa"/><rect x="2.700" y="2.700" width="24.600" height="24.600" rx="4.600" fill="none" stroke="#a9cffd" stroke-width="1.300"/><g fill="none" stroke="#fff" stroke-width="2" stroke-linecap="round"><path d="M16.80 7.20L10.70 17.60"/><path d="M9.80 20.90L8.10 23.20"/><path d="M12.30 7.20L22.30 22.80"/><path d="M6.10 18.50H24.10"/></g></svg>
<div class="t " style="left:600.4px;top:147.20px;font-size:22.5px;line-height:28px;color:#262626;font-weight:400;letter-spacing:0.741px;">TodoList</div>
<svg style="position:absolute;left:700.5px;top:151.9px" width="7" height="19" viewBox="0 0 7 19" ><path d="M1.200 1L5.600 9.500L1.200 18" fill="none" stroke="#808080" stroke-width="2.400" stroke-linecap="round" stroke-linejoin="round"/></svg>
<svg style="position:absolute;left:725px;top:151px" width="25.4" height="19.4" viewBox="0 0 30 24" preserveAspectRatio="none"><path d="M0 4.2C0 1.9 1.2 0.6 3.4 0.6H9.6c1.3 0 2 .3 2.9 1.1l.9.8c.6.5 1.1.7 2 .7H26.4c2.3 0 3.6 1.3 3.6 3.6V7H0Z" fill="#868b90"/><path d="M0 8.6H30V20c0 2.4-1.3 3.7-3.7 3.7H3.7C1.3 23.7 0 22.4 0 20Z" fill="#868b90"/></svg>
<div class="t " style="left:762.7px;top:147.20px;font-size:22.5px;line-height:28px;color:#262626;font-weight:400;letter-spacing:0.741px;">TodoList</div>
<svg style="position:absolute;left:862.5px;top:151.9px" width="7" height="19" viewBox="0 0 7 19" ><path d="M1.200 1L5.600 9.500L1.200 18" fill="none" stroke="#808080" stroke-width="2.400" stroke-linecap="round" stroke-linejoin="round"/></svg>
<svg style="position:absolute;left:887px;top:151px" width="25.4" height="19.4" viewBox="0 0 30 24" preserveAspectRatio="none"><path d="M0 4.2C0 1.9 1.2 0.6 3.4 0.6H9.6c1.3 0 2 .3 2.9 1.1l.9.8c.6.5 1.1.7 2 .7H26.4c2.3 0 3.6 1.3 3.6 3.6V7H0Z" fill="#868b90"/><path d="M0 8.6H30V20c0 2.4-1.3 3.7-3.7 3.7H3.7C1.3 23.7 0 22.4 0 20Z" fill="#868b90"/></svg>
<div class="t " style="left:924px;top:147.20px;font-size:22.5px;line-height:28px;color:#262626;font-weight:400;letter-spacing:0.618px;">ViewModel</div>
<svg style="position:absolute;left:1050.5px;top:151.9px" width="7" height="19" viewBox="0 0 7 19" ><path d="M1.200 1L5.600 9.500L1.200 18" fill="none" stroke="#808080" stroke-width="2.400" stroke-linecap="round" stroke-linejoin="round"/></svg>
<svg style="position:absolute;left:1075.5px;top:150.8px" width="24.6" height="19.8" viewBox="2.3 3.3 18.4 16.7" preserveAspectRatio="none"><path d="M13.543 3.41c4.114 2.47 6.545 7.162 5.549 11.131-.024.093-.05.181-.076.272l.002.001c2.062 2.538 1.5 5.258 1.236 4.745-1.072-2.086-3.066-1.568-4.088-1.043a6.803 6.803 0 0 1-.281.158l-.02.012-.002.002c-2.115 1.123-4.957 1.205-7.812-.022a12.568 12.568 0 0 1-5.64-4.838c.649.48 1.35.902 2.097 1.252 3.019 1.414 6.051 1.311 8.197-.002C9.651 12.73 7.101 9.67 5.146 7.191a10.628 10.628 0 0 1-1.005-1.384c2.34 2.142 6.038 4.83 7.365 5.576C8.69 8.408 6.208 4.743 6.324 4.86c4.436 4.47 8.528 6.996 8.528 6.996.154.085.27.154.36.213.085-.215.16-.437.224-.668.708-2.588-.09-5.548-1.893-7.992z" fill="#f0763f"/></svg>
<div class="t " style="left:1112.4px;top:147.20px;font-size:22.5px;line-height:28px;color:#262626;font-weight:400;letter-spacing:0.659px;">TodoListViewModel</div>
<svg style="position:absolute;left:1327.5px;top:151.9px" width="7" height="19" viewBox="0 0 7 19" ><path d="M1.200 1L5.600 9.500L1.200 18" fill="none" stroke="#808080" stroke-width="2.400" stroke-linecap="round" stroke-linejoin="round"/></svg>
<div style="position:absolute;left:1351.8px;top:145.9px;width:27.8px;height:28px;background:#c05ad6;border-radius:6.500px"></div>
<div class="t " style="left:1357.4px;top:146.68px;font-size:22px;line-height:28px;color:#fff;font-weight:700;-webkit-text-stroke:0;">C</div>
<div class="t " style="left:1390.1px;top:147.20px;font-size:22.5px;line-height:28px;color:#262626;font-weight:400;letter-spacing:0.678px;">TodoListViewModel</div>
<div style="position:absolute;left:546px;top:632px;width:2478px;height:44px;background:#ecf3fe"></div>
<div style="position:absolute;left:652px;top:194.5px;width:14px;height:259px;background:#e8e8e8;border-radius:7px"></div>
<div style="position:absolute;left:652px;top:632px;width:14px;height:1054px;background:#e8e8e8;border-radius:7px"></div>
<div style="position:absolute;left:650.5px;top:720px;width:14px;height:86.79999999999995px;background:#d4d4d4;border-radius:8.500px;border:1.500px solid #f6f6f6"></div>
<div style="position:absolute;left:650.5px;top:940px;width:14px;height:264px;background:#d4d4d4;border-radius:8.500px;border:1.500px solid #f6f6f6"></div>
<div style="position:absolute;left:650.5px;top:1028px;width:14px;height:132px;background:#bdbdbd;border-radius:8.500px;border:1.500px solid #f6f6f6"></div>
<div style="position:absolute;left:652px;top:632px;width:14px;height:44px;background:rgba(200,215,240,0.350);border-radius:7px 7px 0 0"></div>
<div class="ln" style="top:192px;color:#a6a6a6">1</div>
<pre class="cl" style="top:192px"><span style="color:#6c7986">//</span></pre>
<div class="ln" style="top:236px;color:#a6a6a6">2</div>
<pre class="cl" style="top:236px"><span style="color:#6c7986">//  TodoListViewModel.swift</span></pre>
<div class="ln" style="top:280px;color:#a6a6a6">3</div>
<pre class="cl" style="top:280px"><span style="color:#6c7986">//  TodoList</span></pre>
<div class="ln" style="top:324px;color:#a6a6a6">4</div>
<pre class="cl" style="top:324px"><span style="color:#6c7986">//</span></pre>
<div class="ln" style="top:368px;color:#a6a6a6">5</div>
<pre class="cl" style="top:368px"><span style="color:#6c7986">//  Created by Russell Gordon on 2024-04-14.</span></pre>
<div class="ln" style="top:412px;color:#a6a6a6">6</div>
<pre class="cl" style="top:412px"><span style="color:#6c7986">//</span></pre>
<div class="ln" style="top:456px;color:#a6a6a6">7</div>
<div class="ln" style="top:500px;color:#a6a6a6">8</div>
<pre class="cl" style="top:500px"><span class="k">import</span><span style="color:#262626"> Foundation</span></pre>
<div class="ln" style="top:544px;color:#a6a6a6">9</div>
<div class="ln" style="top:588px;color:#a6a6a6">10</div>
<pre class="cl" style="top:588px"><span style="color:#262626">@Observable</span></pre>
<div class="ln" style="top:632px;color:#1f1f1f">11</div>
<pre class="cl" style="top:632px"><span class="k">class</span> <span style="color:#23608a">TodoListViewModel</span><span style="color:#262626"> {</span></pre>
<div class="ln" style="top:676px;color:#a6a6a6">12</div>
<div class="ln" style="top:720px;color:#a6a6a6">13</div>
<pre class="cl" style="top:720px">    <span style="color:#6c7986">// </span><span style="color:#5b6570;font-weight:700">MARK: Stored properties</span></pre>
<div class="ln" style="top:764px;color:#a6a6a6">14</div>
<pre class="cl" style="top:764px">    <span style="color:#6c7986">// The list of to-do items</span></pre>
<div class="ln" style="top:808px;color:#a6a6a6">15</div>
<pre class="cl" style="top:808px">    <span class="k">var</span> <span style="color:#2a78ad">todos</span><span style="color:#262626">: [</span><span style="color:#2c545c">TodoItem</span><span style="color:#262626">]</span></pre>
<div class="ln" style="top:852px;color:#a6a6a6">16</div>
<div class="ln" style="top:896px;color:#a6a6a6">17</div>
<pre class="cl" style="top:896px">    <span style="color:#6c7986">// </span><span style="color:#5b6570;font-weight:700">MARK: Initializer(s)</span></pre>
<div class="ln" style="top:940px;color:#a6a6a6">18</div>
<pre class="cl" style="top:940px">    <span class="k">init</span><span style="color:#262626">(</span><span style="color:#2a78ad">todos</span><span style="color:#262626">: [</span><span style="color:#2c545c">TodoItem</span><span style="color:#262626">] = []) {</span></pre>
<div class="ln" style="top:984px;color:#a6a6a6">19</div>
<pre class="cl" style="top:984px">        <span class="k">self</span><span style="color:#262626">.</span><span style="color:#457a82">todos</span><span style="color:#262626"> = todos</span></pre>
<div class="ln" style="top:1028px;color:#a6a6a6">20</div>
<pre class="cl" style="top:1028px">        <span style="color:#4b21b0">Task</span><span style="color:#262626"> {</span></pre>
<div class="ln" style="top:1072px;color:#a6a6a6">21</div>
<pre class="cl" style="top:1072px">            <span class="k">try</span> <span class="k">await</span> <span style="color:#457a82">getTodos</span><span style="color:#262626">()</span></pre>
<div class="ln" style="top:1116px;color:#a6a6a6">22</div>
<pre class="cl" style="top:1116px">        <span style="color:#262626">}</span></pre>
<div class="ln" style="top:1160px;color:#a6a6a6">23</div>
<pre class="cl" style="top:1160px">    <span style="color:#262626">}</span></pre>
<div class="ln" style="top:1204px;color:#a6a6a6">24</div>
<div class="ln" style="top:1248px;color:#a6a6a6">25</div>
<pre class="cl" style="top:1248px">    <span style="color:#6c7986">// </span><span style="color:#5b6570;font-weight:700">MARK: Functions</span></pre>
<div class="ln" style="top:1292px;color:#a6a6a6">26</div>
<pre class="cl" style="top:1292px">    <span class="k">func</span> <span style="color:#2a78ad">getTodos</span><span style="color:#262626">() </span><span class="k">async</span> <span class="k">throws</span><span style="color:#262626"> {</span><span class="fold"><i></i><i></i><i></i></span><span style="color:#262626">}</span></pre>
<div style="position:absolute;left:652px;top:1292px;width:14px;height:44px;background:#a2a2a2"></div>
<svg style="position:absolute;left:654.5px;top:1307px" width="9" height="14" viewBox="0 0 9 14" ><path d="M1.800 1.800L7.200 7.100L1.800 12.400" fill="none" stroke="#f4f4f4" stroke-width="2.200" stroke-linecap="round" stroke-linejoin="round"/></svg>
<div class="ln" style="top:1336px;color:#a6a6a6">43</div>
<div class="ln" style="top:1380px;color:#a6a6a6">44</div>
<pre class="cl" style="top:1380px">    <span class="k">func</span> <span style="color:#2a78ad">createToDo</span><span style="color:#262626">(</span><span style="color:#2a78ad">withTitle</span><span style="color:#262626"> title: </span><span style="color:#4b21b0">String</span><span style="color:#262626">) {</span><span class="fold"><i></i><i></i><i></i></span><span style="color:#262626">}</span></pre>
<div style="position:absolute;left:652px;top:1380px;width:14px;height:44px;background:#a2a2a2"></div>
<svg style="position:absolute;left:654.5px;top:1395px" width="9" height="14" viewBox="0 0 9 14" ><path d="M1.800 1.800L7.200 7.100L1.800 12.400" fill="none" stroke="#f4f4f4" stroke-width="2.200" stroke-linecap="round" stroke-linejoin="round"/></svg>
<div class="ln" style="top:1424px;color:#a6a6a6">80</div>
<div class="ln" style="top:1468px;color:#a6a6a6">81</div>
<pre class="cl" style="top:1468px">    <span class="k">func</span> <span style="color:#2a78ad">delete</span><span style="color:#262626">(</span><span style="color:#2a78ad">_</span><span style="color:#262626"> todo: </span><span style="color:#2c545c">TodoItem</span><span style="color:#262626">) {</span><span class="fold"><i></i><i></i><i></i></span><span style="color:#262626">}</span></pre>
<div style="position:absolute;left:652px;top:1468px;width:14px;height:44px;background:#a2a2a2"></div>
<svg style="position:absolute;left:654.5px;top:1483px" width="9" height="14" viewBox="0 0 9 14" ><path d="M1.800 1.800L7.200 7.100L1.800 12.400" fill="none" stroke="#f4f4f4" stroke-width="2.200" stroke-linecap="round" stroke-linejoin="round"/></svg>
<div class="ln" style="top:1512px;color:#a6a6a6">106</div>
<div class="ln" style="top:1556px;color:#a6a6a6">107</div>
<pre class="cl" style="top:1556px">    <span class="k">func</span> <span style="color:#2a78ad">update</span><span style="color:#262626">(</span><span style="color:#2a78ad">todo</span><span style="color:#262626"> updatedTodo: </span><span style="color:#2c545c">TodoItem</span><span style="color:#262626">) {</span><span class="fold"><i></i><i></i><i></i></span><span style="color:#262626">}</span></pre>
<div style="position:absolute;left:652px;top:1556px;width:14px;height:44px;background:#a2a2a2"></div>
<svg style="position:absolute;left:654.5px;top:1571px" width="9" height="14" viewBox="0 0 9 14" ><path d="M1.800 1.800L7.200 7.100L1.800 12.400" fill="none" stroke="#f4f4f4" stroke-width="2.200" stroke-linecap="round" stroke-linejoin="round"/></svg>
<div class="ln" style="top:1600px;color:#a6a6a6">128</div>
<div class="ln" style="top:1644px;color:#a6a6a6">129</div>
<pre class="cl" style="top:1644px"><span style="color:#262626">}</span></pre>
<div class="ln" style="top:1688px;color:#a6a6a6">130</div>
<svg style="position:absolute;left:568px;top:1851.5px" width="31" height="19" viewBox="0 0 31 19" ><path d="M3.500 0H21c1 0 1.800.400 2.400 1.200L30 9.500L23.400 17.800c-.600.800-1.400 1.200-2.400 1.200H3.500C1.300 19 0 17.700 0 15.500V3.500C0 1.300 1.300 0 3.500 0Z" fill="#2f74f2"/></svg>
<div style="position:absolute;left:613.8px;top:1849.5px;width:2px;height:23px;background:#e1e1e1"></div>
<svg style="position:absolute;left:636px;top:1847.5px" width="20" height="27" viewBox="0 0 20 27" ><rect x="1.100" y="1.100" width="5" height="24.800" rx="1.800" fill="none" stroke="#6e6e6e" stroke-width="2"/><rect x="13.400" y="1.100" width="5" height="24.800" rx="1.800" fill="none" stroke="#6e6e6e" stroke-width="2"/></svg>
<svg style="position:absolute;left:692px;top:1850px" width="29" height="24" viewBox="0 0 29 24" ><g fill="none" stroke="#c4c4c4" stroke-width="2" stroke-linecap="round" stroke-linejoin="round"><path d="M2 13.500L13.500 2.500L25.500 13.500"/><path d="M26.500 6.500V14.500H18.500"/><rect x="5.500" y="18" width="16" height="4.500"/></g></svg>
<svg style="position:absolute;left:756px;top:1848px" width="20" height="26" viewBox="0 0 20 26" ><g fill="none" stroke="#c4c4c4" stroke-width="2" stroke-linecap="round" stroke-linejoin="round"><path d="M10 1.500V16.500M3.500 10L10 16.500L16.500 10"/><rect x="1.500" y="20" width="17" height="4.500"/></g></svg>
<svg style="position:absolute;left:816px;top:1848px" width="20" height="26" viewBox="0 0 20 26" ><g fill="none" stroke="#c4c4c4" stroke-width="2" stroke-linecap="round" stroke-linejoin="round"><path d="M10 16.500V1.500M3.500 8L10 1.500L16.500 8"/><rect x="1.500" y="20" width="17" height="4.500"/></g></svg>
<div style="position:absolute;left:855.8px;top:1849.5px;width:2px;height:23px;background:#e1e1e1"></div>
<svg style="position:absolute;left:876px;top:1847.5px" width="24" height="28" viewBox="0 0 24 28" ><g fill="none" stroke="#6e6e6e" stroke-width="2" stroke-linejoin="round"><path d="M9.500 8.500L21.500 3.500V20.500L9.500 26Z"/><path d="M5.500 6.500L17.500 1.800M5.500 6.500V23.500"/><path d="M1.500 5L13 .8M1.500 5V21.500"/></g></svg>
<svg style="position:absolute;left:934px;top:1847.5px" width="28" height="27" viewBox="0 0 28 27" ><g fill="none" stroke="#6e6e6e" stroke-width="2"><circle cx="6" cy="5" r="3.800"/><circle cx="6" cy="22" r="3.800"/><circle cx="22.500" cy="13" r="3.800"/><path d="M9.300 6.800L19.200 11.400M9.300 20.200L19.200 14.800"/></g></svg>
<svg style="position:absolute;left:996px;top:1848px" width="24" height="26" viewBox="0 0 24 26" ><g fill="none" stroke="#6e6e6e" stroke-width="2"><rect x="1.200" y="1.200" width="21.600" height="10" rx="5"/><rect x="1.200" y="14.800" width="21.600" height="10" rx="5"/></g><circle cx="6.600" cy="6.200" r="2.800" fill="#6e6e6e"/><circle cx="17.400" cy="19.800" r="2.800" fill="#6e6e6e"/></svg>
<svg style="position:absolute;left:1055px;top:1847.5px" width="27" height="27" viewBox="0 0 27 27" ><path d="M2 12.500L25 2L14.500 25V12.500Z" fill="none" stroke="#6e6e6e" stroke-width="2.200" stroke-linejoin="round"/></svg>
<div style="position:absolute;left:1097.2px;top:1849.5px;width:2px;height:23px;background:#e1e1e1"></div>
<svg style="position:absolute;left:1118px;top:1849px" width="23.5" height="23.5" viewBox="0 0 30 30" ><rect x="0" y="0" width="30" height="30" rx="6.5" fill="#7d7d7d"/><g fill="none" stroke="#fff" stroke-width="2.2" stroke-linecap="round"><path d="M16.56 8.23L11.27 17.26"/><path d="M10.48 20.12L9.01 22.12"/><path d="M12.66 8.23L21.34 21.77"/><path d="M7.27 18.04H22.90"/></g></svg>
<div class="t " style="left:1154.8px;top:1847.70px;font-size:22.5px;line-height:28px;color:#262626;font-weight:400;letter-spacing:0.741px;">TodoList</div>
<div class="t " style="left:2760.4px;top:1847.20px;font-size:22.5px;line-height:28px;color:#7c7c7c;font-weight:400;letter-spacing:0.831px;">Line: 11  Col: 12</div>
<div style="position:absolute;left:2953.8px;top:1849px;width:2px;height:24px;background:#e1e1e1"></div>
<svg style="position:absolute;left:2972.5px;top:1847.5px" width="27" height="27" viewBox="0 0 27 27" ><rect x="1.300" y="1.300" width="24.400" height="24.400" rx="4.800" fill="none" stroke="#7a7a7a" stroke-width="2"/><rect x="4.800" y="16.500" width="17.400" height="5.600" rx="1.800" fill="#7a7a7a"/></svg>
</div>
</body></html>
